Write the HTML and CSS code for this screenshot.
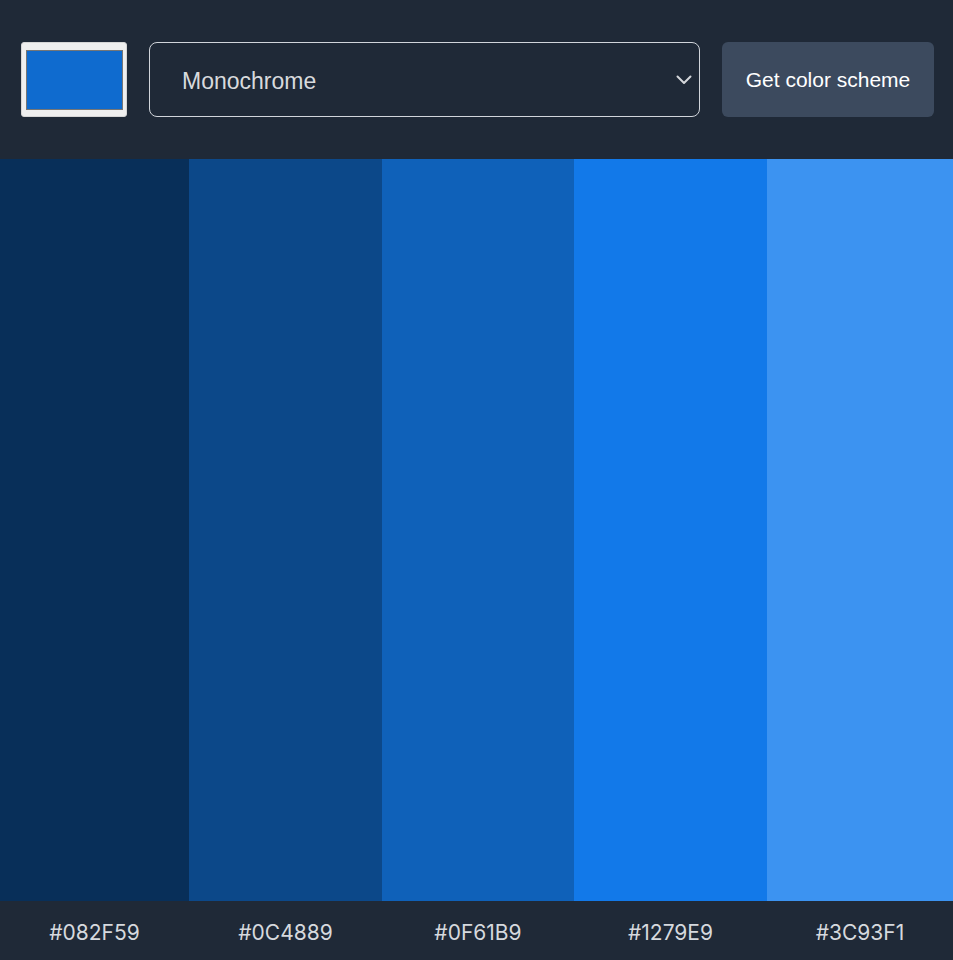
FILE: index.html
```html
<!DOCTYPE html>
<html lang="en">
<head>
<meta charset="utf-8">
<title>Color Scheme</title>
<link rel="stylesheet" href="styles.css">
</head>
<body>
<header class="toolbar">
  <div class="picker"><div class="picker-swatch"></div></div>
  <div class="select">
    <span class="select-value">Monochrome</span>
    <svg class="chevron" width="16" height="10" viewBox="0 0 16 10"><path d="M1.5 1.5 L8 8 L14.5 1.5" fill="none" stroke="#d4d6da" stroke-width="2" stroke-linecap="round" stroke-linejoin="round"/></svg>
  </div>
  <button class="get-btn">Get color scheme</button>
</header>
<main class="palette">
  <div class="col"><div class="swatch c1"></div><div class="label">#082F59</div></div>
  <div class="col"><div class="swatch c2"></div><div class="label">#0C4889</div></div>
  <div class="col"><div class="swatch c3"></div><div class="label">#0F61B9</div></div>
  <div class="col"><div class="swatch c4"></div><div class="label">#1279E9</div></div>
  <div class="col"><div class="swatch c5"></div><div class="label">#3C93F1</div></div>
</main>
</body>
</html>
```
FILE: styles.css
```css
html, body {
  margin: 0;
  padding: 0;
  height: 100%;
  background: #1f2937;
  overflow: hidden;
}
body {
  display: flex;
  flex-direction: column;
  font-family: "Liberation Sans", Arial, sans-serif;
}
.toolbar {
  display: flex;
  align-items: stretch;
  gap: 22px;
  padding: 42px 19px 42px 21px;
  height: 75px;
  flex: 0 0 auto;
}
.picker {
  width: 106px;
  box-sizing: border-box;
  background: #efefef;
  border: 1px solid #d6d6d6;
  border-radius: 3px;
  padding: 7px 3px 6px 4px;
  display: flex;
}
.picker-swatch {
  flex: 1;
  background: #0f6bcf;
  border: 1px solid #767676;
}
.select {
  flex: 1;
  display: flex;
  align-items: center;
  justify-content: space-between;
  border: 1px solid #d1d5db;
  border-radius: 8px;
  padding: 0 7px 0 32px;
  color: #d8dadd;
  font-size: 23px;
}
.select-value {
  padding-top: 3px;
}
.chevron {
  display: block;
}
.get-btn {
  width: 212px;
  border: none;
  border-radius: 6px;
  background: #3c4a5e;
  color: #ffffff;
  font-family: "Liberation Sans", Arial, sans-serif;
  font-size: 21px;
  padding: 0;
}
.palette {
  flex: 1;
  display: grid;
  grid-template-columns: 189px 193px 192px 193px 1fr;
}
.col {
  display: flex;
  flex-direction: column;
}
.swatch {
  flex: 1;
}
.label {
  height: 59px;
  display: flex;
  align-items: center;
  justify-content: center;
  font-family: Inter, "Liberation Sans", sans-serif;
  font-size: 21px;
  color: #d6d9de;
  padding-top: 3px;
  box-sizing: border-box;
}
.c1 { background: #082f59; }
.c2 { background: #0c4889; }
.c3 { background: #0f61b9; }
.c4 { background: #1279e9; }
.c5 { background: #3c93f1; }
```
